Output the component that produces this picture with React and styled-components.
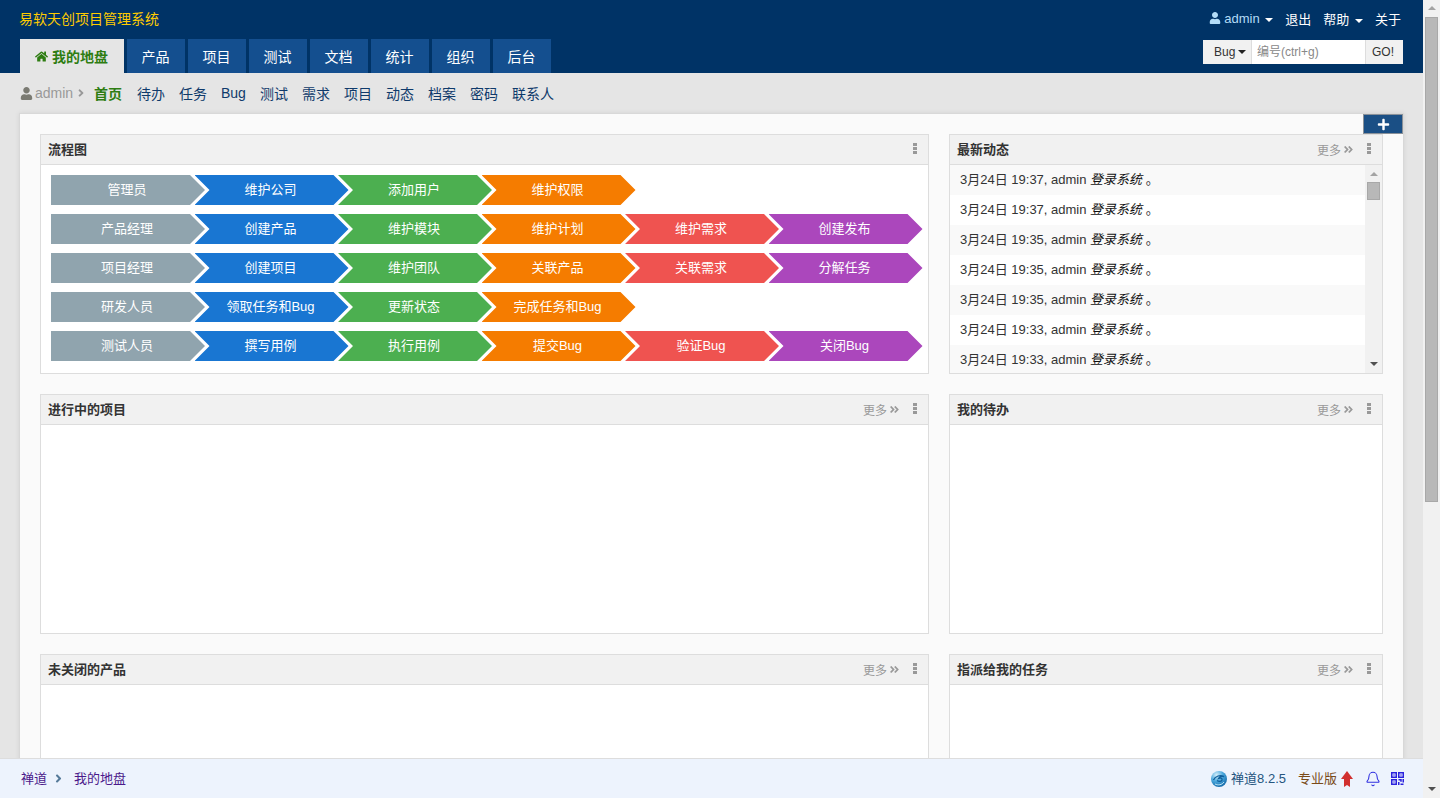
import React from 'react';
import styled, { createGlobalStyle } from 'styled-components';
import { Bell } from 'lucide-react';
import { FaUser, FaHome, FaPlus, FaAngleDoubleRight, FaAngleRight } from 'react-icons/fa';

const flows = [
  ['管理员', '维护公司', '添加用户', '维护权限'],
  ['产品经理', '创建产品', '维护模块', '维护计划', '维护需求', '创建发布'],
  ['项目经理', '创建项目', '维护团队', '关联产品', '关联需求', '分解任务'],
  ['研发人员', '领取任务和Bug', '更新状态', '完成任务和Bug'],
  ['测试人员', '撰写用例', '执行用例', '提交Bug', '验证Bug', '关闭Bug'],
];

const flowColors = ['#90a4ae', '#1976d2', '#4caf50', '#f57c00', '#ef5350', '#ab47bc'];

const navItems = ['产品', '项目', '测试', '文档', '统计', '组织', '后台'];
const subItems = ['待办', '任务', 'Bug', '测试', '需求', '项目', '动态', '档案', '密码', '联系人'];
const times = ['19:37', '19:37', '19:35', '19:35', '19:35', '19:33', '19:33'];

const App = () => {
  return (
    <Shell>
      <GlobalStyle />
      <Page>
        <Header>
          <TopRow>
            <Brand>易软天创项目管理系统</Brand>
            <TopMenu>
              <UserLink><FaUser size={12} /> admin <Caret $color="#fff" /></UserLink>
              <TopLink>退出</TopLink>
              <TopLink>帮助 <Caret $color="#fff" /></TopLink>
              <TopLink>关于</TopLink>
            </TopMenu>
          </TopRow>
          <NavRow>
            <Tabs>
              <ActiveTab><FaHome size={13} /> 我的地盘</ActiveTab>
              {navItems.map((item) => <Tab key={item}>{item}</Tab>)}
            </Tabs>
            <Search>
              <SearchType>Bug <Caret $color="#222" /></SearchType>
              <SearchInput placeholder="编号(ctrl+g)" readOnly />
              <SearchGo>GO!</SearchGo>
            </Search>
          </NavRow>
        </Header>

        <SubNav>
          <SubUser><FaUser size={13} color="#7a7a72" /> admin <FaAngleRight size={12} /></SubUser>
          <SubActive>首页</SubActive>
          {subItems.map((item, i) => <SubLink key={i}>{item}</SubLink>)}
        </SubNav>

        <Board>
          <AddBlock><FaPlus size={13} /></AddBlock>
          <Grid>
            <Panel>
              <PanelHead title="流程图" />
              <FlowBody>
                {flows.map((row) => (
                  <FlowRow key={row[0]}>
                    {row.map((step, i) => (
                      <FlowStep key={step} $color={flowColors[i]} $first={i === 0}>{step}</FlowStep>
                    ))}
                  </FlowRow>
                ))}
              </FlowBody>
            </Panel>

            <Panel>
              <PanelHead title="最新动态" more />
              <DynamicBody>
                <DynamicList>
                  {times.map((time, i) => (
                    <DynamicRow key={i} $odd={i % 2 === 0}>
                      3月24日 {time}, admin <em>登录系统</em> 。
                    </DynamicRow>
                  ))}
                </DynamicList>
                <MiniScrollbar>
                  <ArrowUp $color="#a3a3a3" />
                  <MiniThumb />
                  <MiniSpacer />
                  <ArrowDown $color="#505050" />
                </MiniScrollbar>
              </DynamicBody>
            </Panel>

            <Panel>
              <PanelHead title="进行中的项目" more />
            </Panel>
            <Panel>
              <PanelHead title="我的待办" more />
            </Panel>
            <Panel>
              <PanelHead title="未关闭的产品" more />
            </Panel>
            <Panel>
              <PanelHead title="指派给我的任务" more />
            </Panel>
          </Grid>
        </Board>

        <Footer>
          <Crumbs>
            <CrumbLink>禅道</CrumbLink>
            <CrumbArrow><FaAngleRight size={13} /></CrumbArrow>
            <CrumbLink>我的地盘</CrumbLink>
          </Crumbs>
          <PowerBy>
            <Globe />
            <Version>禅道8.2.5</Version>
            <Edition>专业版</Edition>
            <UpArrow />
            <BellLink><Bell size={16} strokeWidth={1.6} /></BellLink>
            <QrLink><QrCode /></QrLink>
          </PowerBy>
        </Footer>
      </Page>

      <PageScrollbar>
        <ArrowUp $color="#a3a3a3" />
        <PageThumb />
        <MiniSpacer />
        <ArrowDown $color="#505050" />
      </PageScrollbar>
    </Shell>
  );
};

const PanelHead = ({ title, more }) => (
  <Head>
    <HeadTitle>{title}</HeadTitle>
    <HeadActions>
      {more && <More>更多 <FaAngleDoubleRight size={11} /></More>}
      <Dots><i /><i /><i /></Dots>
    </HeadActions>
  </Head>
);

const Globe = () => (
  <svg width="16" height="16" viewBox="0 0 16 16">
    <defs>
      <radialGradient id="globeFill" cx="35%" cy="25%" r="80%">
        <stop offset="0%" stopColor="#d4eefa" />
        <stop offset="50%" stopColor="#4aa7dc" />
        <stop offset="100%" stopColor="#1268a8" />
      </radialGradient>
    </defs>
    <circle cx="8" cy="8" r="8" fill="url(#globeFill)" />
    <path d="M2.500 9c1.500-4 7-5.500 10.500-3.500-2.500-.5-5 .5-5.500 2 2-1 4-.5 3.500 1.500-.5 1.500-3 2-5 .5" fill="none" stroke="#0f5f9c" strokeWidth="1.300" />
    <path d="M4 13c3 1.500 7 1 9-2" fill="none" stroke="#bfe6f7" strokeWidth="1" />
  </svg>
);

const UpArrow = () => (
  <svg width="12" height="16" viewBox="0 0 12 16">
    <polygon points="6,0 12,8 9,8 9,16 6,14 3,16 3,8 0,8" fill="#d12f2f" />
  </svg>
);

const QrCode = () => (
  <svg width="13" height="13" viewBox="0 0 13 13" fill="none" stroke="#2a22dd" strokeWidth="1.500">
    <rect x="0.750" y="0.750" width="4.500" height="4.500" />
    <rect x="7.750" y="0.750" width="4.500" height="4.500" />
    <rect x="0.750" y="7.750" width="4.500" height="4.500" />
    <path d="M2.500 3h1M9.500 3h1M2.500 10h1M7.500 7.750h2.500v2M12.250 7v3.500M7.750 10v3M9.500 12.250h3" />
  </svg>
);

const GlobalStyle = createGlobalStyle`
  html, body {
    margin: 0;
    height: 100%;
    overflow: hidden;
  }
  body {
    font-family: "Liberation Sans", "Noto Sans CJK SC", sans-serif;
    font-size: 13px;
    color: #333;
  }
`;

const Shell = styled.div`
  display: flex;
  width: 1440px;
  height: 798px;
  overflow: hidden;
`;

const Page = styled.div`
  position: relative;
  flex: 1;
  min-width: 0;
  background: #e5e5e5;
  overflow: hidden;
`;

const Header = styled.div`
  background: #003366;
  height: 73px;
  padding: 0 20px;
`;

const TopRow = styled.div`
  height: 39px;
  display: flex;
  justify-content: space-between;
  align-items: center;
`;

const Brand = styled.div`
  color: #ffcc00;
  font-size: 14px;
  margin: 0 0 3px -1px;
`;

const TopMenu = styled.div`
  display: flex;
  align-items: center;
  gap: 12px;
  padding: 0 2px 2px 0;
`;

const TopLink = styled.span`
  color: #fff;
  font-size: 13px;
`;

const UserLink = styled(TopLink)`
  color: #b3dcf7;
  svg {
    vertical-align: -1px;
  }
`;

const Caret = styled.span`
  display: inline-block;
  margin-left: 2px;
  vertical-align: middle;
  border-top: 4px solid ${(props) => props.$color};
  border-left: 4px solid transparent;
  border-right: 4px solid transparent;
`;

const NavRow = styled.div`
  height: 34px;
  display: flex;
  justify-content: space-between;
`;

const Tabs = styled.div`
  display: flex;
  gap: 3px;
`;

const Tab = styled.div`
  width: 58px;
  display: flex;
  align-items: center;
  justify-content: center;
  background: #144f8f;
  color: #fff;
  font-size: 14px;
  padding-right: 1px;
  box-sizing: border-box;
`;

const ActiveTab = styled(Tab)`
  width: 104px;
  gap: 4px;
  background: #e5e5e5;
  color: #2e7d12;
  font-weight: bold;
`;

const Search = styled.div`
  display: flex;
  height: 24px;
  margin-top: 1px;
  font-size: 12px;
`;

const SearchType = styled.div`
  width: 49px;
  box-sizing: border-box;
  padding-left: 11px;
  display: flex;
  align-items: center;
  gap: 1px;
  background: #f1f1f1;
  color: #333;
  border-right: 1px solid #ddd;
`;

const SearchInput = styled.input`
  width: 113px;
  box-sizing: border-box;
  border: 0;
  outline: 0;
  padding: 0 5px;
  font: inherit;
  background: #fff;
  &::placeholder {
    color: #888;
  }
`;

const SearchGo = styled.div`
  width: 38px;
  box-sizing: border-box;
  padding-right: 3px;
  display: flex;
  align-items: center;
  justify-content: center;
  background: #f1f1f1;
  color: #333;
  border-left: 1px solid #ddd;
`;

const SubNav = styled.div`
  height: 40px;
  padding: 0 20px;
  display: flex;
  align-items: center;
  gap: 14px;
  font-size: 14px;
`;

const SubUser = styled.span`
  display: flex;
  align-items: center;
  gap: 2px;
  margin-right: -3px;
  width: 63px;
  color: #999;
  white-space: nowrap;
  svg {
    flex: none;
  }
`;

const SubLink = styled.span`
  color: #0f3a6b;
`;

const SubActive = styled.span`
  color: #2e7d12;
  font-weight: bold;
  margin-right: 1px;
`;

const Board = styled.div`
  position: relative;
  margin: 0 19px;
  box-sizing: border-box;
  background: #fafafa;
  border: 1px solid #d8d8d8;
  border-bottom: 0;
  padding: 20px;
  box-shadow: 0 0 5px rgba(0, 0, 0, 0.08);
`;

const AddBlock = styled.div`
  position: absolute;
  top: 0;
  right: 0;
  width: 40px;
  height: 20px;
  box-sizing: border-box;
  display: flex;
  align-items: center;
  justify-content: center;
  background: #1a4f85;
  border: 1px solid #8a9199;
  color: #fff;
`;

const Grid = styled.div`
  display: grid;
  grid-template-columns: 889px 434px;
  grid-auto-rows: 240px;
  gap: 20px;
`;

const Panel = styled.div`
  box-sizing: border-box;
  background: #fff;
  border: 1px solid #ddd;
  display: flex;
  flex-direction: column;
  min-height: 0;
`;

const Head = styled.div`
  flex: none;
  height: 30px;
  box-sizing: border-box;
  padding: 0 11px 0 7px;
  display: flex;
  align-items: center;
  justify-content: space-between;
  background: #f1f1f1;
  border-bottom: 1px solid #ddd;
`;

const HeadTitle = styled.div`
  font-weight: bold;
  font-size: 13px;
  color: #333;
  margin-bottom: 3px;
`;

const HeadActions = styled.div`
  display: flex;
  align-items: center;
  gap: 13px;
`;

const More = styled.span`
  display: flex;
  align-items: center;
  gap: 2px;
  color: #999;
  font-size: 12px;
`;

const Dots = styled.span`
  display: flex;
  flex-direction: column;
  gap: 1px;
  margin-bottom: 2px;
  i {
    display: block;
    width: 4px;
    height: 3px;
    background: #999;
  }
`;

const FlowBody = styled.div`
  padding: 10px;
  display: flex;
  flex-direction: column;
  gap: 9px;
`;

const FlowRow = styled.div`
  display: flex;
  height: 30px;
`;

const FlowStep = styled.div`
  flex: none;
  width: 154px;
  box-sizing: border-box;
  padding: 0 2px 3px 0;
  margin-left: ${(props) => (props.$first ? '0' : '-10.500px')};
  display: flex;
  align-items: center;
  justify-content: center;
  background: ${(props) => props.$color};
  color: #fff;
  font-size: 13px;
  clip-path: ${(props) =>
    props.$first
      ? 'polygon(0 0, 139px 0, 154px 50%, 139px 100%, 0 100%)'
      : 'polygon(0 0, 139px 0, 154px 50%, 139px 100%, 0 100%, 15px 50%)'};
`;

const DynamicBody = styled.div`
  flex: 1;
  min-height: 0;
  display: flex;
  overflow: hidden;
`;

const DynamicList = styled.div`
  flex: 1;
  min-width: 0;
  overflow: hidden;
`;

const DynamicRow = styled.div`
  height: 30px;
  padding-left: 10px;
  line-height: 30px;
  font-size: 13px;
  color: #333;
  background: ${(props) => (props.$odd ? '#f9f9f9' : '#fff')};
  em {
    color: #111;
  }
`;

const MiniScrollbar = styled.div`
  flex: none;
  width: 17px;
  box-sizing: border-box;
  padding: 7px 0 7px;
  display: flex;
  flex-direction: column;
  align-items: center;
  background: #f1f1f1;
`;

const MiniThumb = styled.div`
  width: 13px;
  height: 18px;
  margin-top: 6px;
  box-sizing: border-box;
  background: #b8b8b8;
  border: 1px solid #a8a8a8;
`;

const MiniSpacer = styled.div`
  flex: 1;
`;

const ArrowUp = styled.span`
  flex: none;
  border-bottom: 4px solid ${(props) => props.$color};
  border-left: 4px solid transparent;
  border-right: 4px solid transparent;
`;

const ArrowDown = styled.span`
  flex: none;
  border-top: 4px solid ${(props) => props.$color};
  border-left: 4px solid transparent;
  border-right: 4px solid transparent;
`;

const Footer = styled.div`
  position: absolute;
  left: 0;
  right: 0;
  bottom: 0;
  height: 40px;
  box-sizing: border-box;
  padding: 0 19px 0 21px;
  display: flex;
  align-items: center;
  justify-content: space-between;
  background: #edf3fd;
  border-top: 1px solid #ddd;
`;

const Crumbs = styled.div`
  display: flex;
  align-items: center;
  margin-bottom: 3px;
`;

const CrumbLink = styled.span`
  color: #4b1a8b;
`;

const CrumbArrow = styled.span`
  display: flex;
  width: 27px;
  padding: 2px 0 0 5px;
  box-sizing: border-box;
  color: #557a99;
`;

const PowerBy = styled.div`
  display: flex;
  align-items: center;
`;

const Version = styled.span`
  margin: 0 0 3px 4px;
  color: #25557f;
`;

const Edition = styled.span`
  margin: 0 4px 3px 12px;
  color: #7a4a18;
`;

const BellLink = styled.span`
  display: flex;
  margin-left: 12px;
  color: #3030e0;
`;

const QrLink = styled.span`
  display: flex;
  margin-left: 10px;
`;

const PageScrollbar = styled.div`
  flex: none;
  width: 17px;
  box-sizing: border-box;
  padding: 6px 0 7px;
  display: flex;
  flex-direction: column;
  align-items: center;
  background: #f1f1f1;
`;

const PageThumb = styled.div`
  width: 13px;
  height: 485px;
  margin-top: 7px;
  box-sizing: border-box;
  background: #b8b8b8;
  border: 1px solid #a8a8a8;
`;

export default App;
